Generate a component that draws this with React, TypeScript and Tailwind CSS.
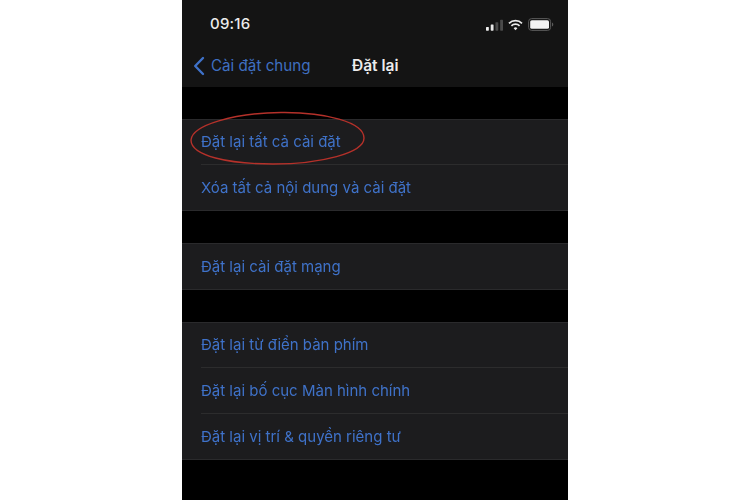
const F = { fontFamily: 'Inter, "Noto Sans", sans-serif' };

type Item = { text: string; up?: boolean; tall?: boolean };

function Row({ text, up, tall, last }: Item & { last?: boolean }) {
  return (
    <div className="pl-[19px]">
      <div className={`${tall ? "h-[46px]" : "h-[45px]"} flex items-center ${last ? "" : "border-b border-[#2c2c2d]"}`}>
        <span className={`text-[15px] leading-none text-[#3f72c9] blur-[0.3px] ${up ? "mb-[2px]" : ""}`}>{text}</span>
      </div>
    </div>
  );
}

function Group({ items }: { items: Item[] }) {
  return (
    <div className="bg-[#1c1c1e] border-t border-b border-[#2a2a2c]">
      {items.map((t, i) => (
        <Row key={t.text} {...t} last={i === items.length - 1} />
      ))}
    </div>
  );
}

export default function App() {
  return (
    <div className="w-[750px] h-[500px] bg-white flex justify-center overflow-hidden" style={F}>
      <div className="relative w-[386px] h-[500px] bg-black flex flex-col">
        <div className="h-[87px] shrink-0 bg-[#141414] flex flex-col">
          <div className="h-[38px] pl-[28px] pr-[14px] flex items-end justify-between pb-[7px]">
            <span className="text-[15px] leading-none font-medium text-[#ececec] tracking-[0.2px]">09:16</span>
            <div className="flex items-center gap-[5px]">
              <svg width="17" height="12" viewBox="0 0 18 12">
                <rect x="0" y="8" width="3" height="4" rx="0.6" fill="#f0f0f0" />
                <rect x="5" y="5.5" width="3" height="6.5" rx="0.6" fill="#e8e8e8" />
                <rect x="10" y="3" width="3" height="9" rx="0.6" fill="#4a4a4a" />
                <rect x="15" y="0.5" width="3" height="11.5" rx="0.6" fill="#4a4a4a" />
              </svg>
              <svg width="15" height="12" viewBox="0 0 15 12" fill="none" stroke="#ececec" strokeWidth="1.7">
                <path d="M1 4.4a9.2 9.2 0 0 1 13 0" />
                <path d="M3.4 6.8a5.8 5.8 0 0 1 8.2 0" />
                <path d="M7.5 11.2 5.6 9.2a2.7 2.7 0 0 1 3.8 0Z" fill="#ececec" stroke="none" />
              </svg>
              <svg width="26" height="13" viewBox="0 0 26 13">
                <rect x="0.6" y="0.6" width="22" height="11.8" rx="3" fill="none" stroke="#5a5a5a" strokeWidth="1" />
                <rect x="2.2" y="2.2" width="18.8" height="8.6" rx="1.6" fill="#f2f2f2" />
                <path d="M24 4.5v4a2 2 0 0 0 1.3-2 2 2 0 0 0-1.3-2Z" fill="#5a5a5a" />
              </svg>
            </div>
          </div>
          <div className="relative flex-1 flex items-start pt-[18px] pl-[11px]">
            <div className="flex items-center gap-[6px]">
              <svg width="12" height="20" viewBox="0 0 12 20" fill="none" stroke="#3f72c9" strokeWidth="2.4" strokeLinecap="round" strokeLinejoin="round">
                <path d="M10 2 2.2 10 10 18" />
              </svg>
              <span className="text-[15.2px] leading-[20px] text-[#3f6fc0]">Cài đặt chung</span>
            </div>
            <span className="absolute left-[170px] top-[18px] text-[15.5px] leading-[20px] font-semibold text-[#ececec]">Đặt lại</span>
          </div>
        </div>
        <div className="h-[32px] shrink-0" />
        <Group items={[{ text: "Đặt lại tất cả cài đặt", up: true }, { text: "Xóa tất cả nội dung và cài đặt" }]} />
        <div className="h-[32px] shrink-0" />
        <Group items={[{ text: "Đặt lại cài đặt mạng" }]} />
        <div className="h-[32px] shrink-0" />
        <Group
          items={[
            { text: "Đặt lại từ điển bàn phím", up: true },
            { text: "Đặt lại bố cục Màn hình chính", tall: true },
            { text: "Đặt lại vị trí & quyền riêng tư" },
          ]}
        />
        <svg className="absolute left-[7px] top-[110px]" width="177" height="56" viewBox="0 0 177 56" fill="none">
          <path d="M2 30C3 15 45 3 92 2.5C136 2 175 12 175 28C175 43 132 54 84 54C40 54 2 46 2 30Z" stroke="#b5312a" strokeWidth="1.4" />
        </svg>
      </div>
    </div>
  );
}
